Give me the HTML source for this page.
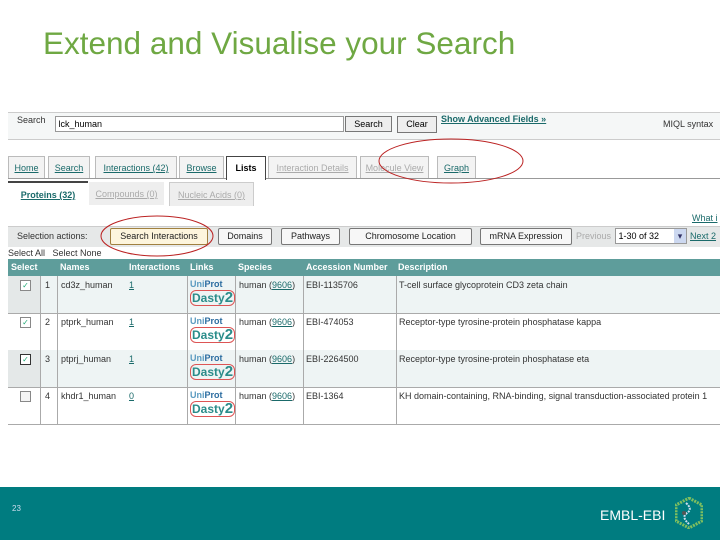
<!DOCTYPE html>
<html><head><style>
body{margin:0;width:720px;height:540px;position:relative;overflow:hidden;background:#fff;font-family:"Liberation Sans",sans-serif;}
.a{position:absolute;}
.t{font-size:9px;color:#333;}
.lk{color:#1a6a6a;text-decoration:underline;}
.gl{color:#aaa;text-decoration:underline;}
.tab{position:absolute;top:156px;height:21px;border:1px solid #bbb;border-bottom:none;background:#f3f3f3;font-size:9px;line-height:22px;text-align:center;}
.btn{position:absolute;top:228px;height:15px;border:1px solid #777;border-radius:2px;background:#f7f7f7;font-size:9px;line-height:15px;text-align:center;color:#222;}
.row{position:absolute;left:8px;width:712px;height:37px;border-bottom:1px solid #aaa;}
.hd{position:absolute;top:0;font-size:9px;font-weight:bold;color:#fff;line-height:17px;}
</style></head><body>
<div class="a" style="left:43px;top:25px;font-size:31.5px;color:#6fa843;">Extend and Visualise your Search</div>

<div class="a" style="left:8px;top:112px;width:712px;height:26px;background:#f5f7f7;border-top:1px solid #ccc;border-bottom:1px solid #ccc;"></div>
<div class="a t" style="left:17px;top:115px;">Search</div>
<div class="a" style="left:55px;top:116px;width:287px;height:14px;border:1px solid #999;background:#fff;font-size:9px;line-height:14px;">&nbsp;lck_human</div>
<div class="a" style="left:345px;top:116px;width:45px;height:14px;border:1px solid #777;background:#eee;font-size:9px;line-height:14px;text-align:center;">Search</div>
<div class="a" style="left:397px;top:116px;width:38px;height:15px;border:1px solid #777;background:#eee;font-size:9px;line-height:15px;text-align:center;">Clear</div>
<div class="a" style="left:441px;top:114px;font-size:9px;font-weight:bold;color:#1a6a6a;text-decoration:underline;">Show Advanced Fields »</div>
<div class="a t" style="left:663px;top:119px;">MIQL syntax</div>

<div class="a" style="left:8px;top:178px;width:712px;height:1px;background:#999;"></div>
<div class="tab" style="left:8px;width:35px;"><span class="lk">Home</span></div>
<div class="tab" style="left:48px;width:40px;"><span class="lk">Search</span></div>
<div class="tab" style="left:95px;width:80px;"><span class="lk">Interactions (42)</span></div>
<div class="tab" style="left:179px;width:43px;"><span class="lk">Browse</span></div>
<div class="tab" style="left:226px;width:38px;height:23px;background:#fff;border-color:#444;font-weight:bold;">Lists</div>
<div class="tab" style="left:268px;width:87px;"><span class="gl">Interaction Details</span></div>
<div class="tab" style="left:360px;width:67px;"><span class="gl">Molecule View</span></div>
<div class="tab" style="left:437px;width:37px;"><span class="lk">Graph</span></div>

<div class="a" style="left:8px;top:181px;width:80px;height:24px;background:#fff;border-top:2px solid #444;font-size:9px;font-weight:bold;line-height:24px;text-align:center;"><span class="lk">Proteins (32)</span></div>
<div class="a" style="left:89px;top:182px;width:75px;height:23px;background:#eee;font-size:9px;line-height:24px;text-align:center;"><span class="gl">Compounds (0)</span></div>
<div class="a" style="left:169px;top:182px;width:83px;height:23px;background:#eee;border:1px solid #ccc;border-bottom:none;font-size:9px;line-height:24px;text-align:center;"><span class="gl">Nucleic Acids (0)</span></div>

<div class="a t" style="left:692px;top:213px;"><span class="lk">What i</span></div>
<div class="a" style="left:8px;top:226px;width:712px;height:20px;background:#e6e8e8;border-top:1px solid #ccc;"></div>
<div class="a t" style="left:17px;top:231px;">Selection actions:</div>
<div class="btn" style="left:110px;width:96px;background:#fdf5dd;border-color:#a08040;">Search Interactions</div>
<div class="btn" style="left:218px;width:52px;">Domains</div>
<div class="btn" style="left:281px;width:57px;">Pathways</div>
<div class="btn" style="left:349px;width:121px;">Chromosome Location</div>
<div class="btn" style="left:480px;width:90px;">mRNA Expression</div>
<div class="a t" style="left:576px;top:231px;color:#aaa;">Previous</div>
<div class="a" style="left:615px;top:228px;width:70px;height:14px;border:1px solid #999;background:#fff;font-size:9px;line-height:14px;">&nbsp;1-30 of 32<span style="position:absolute;right:0;top:0;width:12px;height:14px;background:#ccd8f0;color:#336;text-align:center;">▾</span></div>
<div class="a t" style="left:690px;top:231px;"><span class="lk">Next 2</span></div>
<div class="a t" style="left:8px;top:248px;">Select All &nbsp; Select None</div>

<div class="a" style="left:8px;top:259px;width:712px;height:17px;background:#5e9d9b;">
<div class="hd" style="left:3px;">Select</div><div class="hd" style="left:52px;">Names</div><div class="hd" style="left:121px;">Interactions</div><div class="hd" style="left:182px;">Links</div><div class="hd" style="left:230px;">Species</div><div class="hd" style="left:298px;">Accession Number</div><div class="hd" style="left:390px;">Description</div>
</div>

<div class="row" style="top:276px;background:#eef4f4;"></div>
<div class="row" style="top:313px;"></div>
<div class="row" style="top:350px;background:#eef4f4;"></div>
<div class="row" style="top:387px;"></div>
<div class="a" style="left:8px;top:276px;width:32px;height:37px;background:#e4e8e8;"></div>
<div class="a" style="left:8px;top:350px;width:32px;height:37px;background:#e4e8e8;"></div>
<div class="a" style="left:40px;top:276px;width:1px;height:148px;background:#aaa;"></div>
<div class="a" style="left:57px;top:276px;width:1px;height:148px;background:#aaa;"></div>
<div class="a" style="left:187px;top:276px;width:1px;height:148px;background:#aaa;"></div>
<div class="a" style="left:235px;top:276px;width:1px;height:148px;background:#aaa;"></div>
<div class="a" style="left:303px;top:276px;width:1px;height:148px;background:#aaa;"></div>
<div class="a" style="left:396px;top:276px;width:1px;height:148px;background:#aaa;"></div>

<div class="a" style="left:20px;top:280px;width:9px;height:9px;border:1px solid #888;background:#fff;font-size:8px;line-height:9px;color:#2a7;text-align:center;">✓</div>
<div class="a" style="left:20px;top:317px;width:9px;height:9px;border:1px solid #888;background:#fff;font-size:8px;line-height:9px;color:#2a7;text-align:center;">✓</div>
<div class="a" style="left:20px;top:354px;width:9px;height:9px;border:1px solid #333;background:#fff;font-size:8px;line-height:9px;color:#2a7;text-align:center;">✓</div>
<div class="a" style="left:20px;top:391px;width:9px;height:9px;border:1px solid #888;background:#f4f4f4;"></div>

<div class="a t" style="left:45px;top:280px;">1</div><div class="a t" style="left:45px;top:317px;">2</div><div class="a t" style="left:45px;top:354px;">3</div><div class="a t" style="left:45px;top:391px;">4</div>
<div class="a t" style="left:61px;top:280px;">cd3z_human</div><div class="a t" style="left:61px;top:317px;">ptprk_human</div><div class="a t" style="left:61px;top:354px;">ptprj_human</div><div class="a t" style="left:61px;top:391px;">khdr1_human</div>
<div class="a t lk" style="left:129px;top:280px;">1</div><div class="a t lk" style="left:129px;top:317px;">1</div><div class="a t lk" style="left:129px;top:354px;">1</div><div class="a t lk" style="left:129px;top:391px;">0</div>

<div class="a" style="left:190px;top:278px;font-size:9px;font-weight:bold;color:#5b9bc0;line-height:13px;">Uni<span style="color:#2b6ca0">Prot</span><br><span style="font-size:12px;color:#2a8c8a;border:1px solid #d55;border-radius:6px;padding:0 1px;">Dasty<b style="font-size:15px;">2</b></span></div>
<div class="a" style="left:190px;top:315px;font-size:9px;font-weight:bold;color:#5b9bc0;line-height:13px;">Uni<span style="color:#2b6ca0">Prot</span><br><span style="font-size:12px;color:#2a8c8a;border:1px solid #d55;border-radius:6px;padding:0 1px;">Dasty<b style="font-size:15px;">2</b></span></div>
<div class="a" style="left:190px;top:352px;font-size:9px;font-weight:bold;color:#5b9bc0;line-height:13px;">Uni<span style="color:#2b6ca0">Prot</span><br><span style="font-size:12px;color:#2a8c8a;border:1px solid #d55;border-radius:6px;padding:0 1px;">Dasty<b style="font-size:15px;">2</b></span></div>
<div class="a" style="left:190px;top:389px;font-size:9px;font-weight:bold;color:#5b9bc0;line-height:13px;">Uni<span style="color:#2b6ca0">Prot</span><br><span style="font-size:12px;color:#2a8c8a;border:1px solid #d55;border-radius:6px;padding:0 1px;">Dasty<b style="font-size:15px;">2</b></span></div>

<div class="a t" style="left:239px;top:280px;">human (<span class="lk">9606</span>)</div><div class="a t" style="left:239px;top:317px;">human (<span class="lk">9606</span>)</div><div class="a t" style="left:239px;top:354px;">human (<span class="lk">9606</span>)</div><div class="a t" style="left:239px;top:391px;">human (<span class="lk">9606</span>)</div>
<div class="a t" style="left:306px;top:280px;">EBI-1135706</div><div class="a t" style="left:306px;top:317px;">EBI-474053</div><div class="a t" style="left:306px;top:354px;">EBI-2264500</div><div class="a t" style="left:306px;top:391px;">EBI-1364</div>
<div class="a t" style="left:399px;top:280px;">T-cell surface glycoprotein CD3 zeta chain</div>
<div class="a t" style="left:399px;top:317px;">Receptor-type tyrosine-protein phosphatase kappa</div>
<div class="a t" style="left:399px;top:354px;">Receptor-type tyrosine-protein phosphatase eta</div>
<div class="a t" style="left:399px;top:391px;">KH domain-containing, RNA-binding, signal transduction-associated protein 1</div>

<svg class="a" style="left:0;top:0" width="720" height="540">
<ellipse cx="157" cy="236" rx="56" ry="20" fill="none" stroke="#b22" stroke-width="1"/>
<ellipse cx="451" cy="161" rx="72" ry="22" fill="none" stroke="#b22" stroke-width="1"/>
</svg>

<div class="a" style="left:0;top:487px;width:720px;height:53px;background:#007c80;"></div>
<div class="a" style="left:12px;top:504px;font-size:8px;color:#cde;">23</div>
<div class="a" style="left:600px;top:507px;font-size:14px;color:#fff;">EMBL-EBI</div>
<svg class="a" style="left:675px;top:497px" width="28" height="32">
<polygon points="14,1 27,8 27,24 14,31 1,24 1,8" fill="none" stroke="#7fbf5f" stroke-width="3" stroke-dasharray="2 1"/>
<path d="M11,6 Q18,12 12,16 Q6,20 14,27" fill="none" stroke="#cde" stroke-width="2" stroke-dasharray="2 1"/>
<circle cx="9" cy="16" r="2" fill="#555"/>
</svg>
</body></html>
